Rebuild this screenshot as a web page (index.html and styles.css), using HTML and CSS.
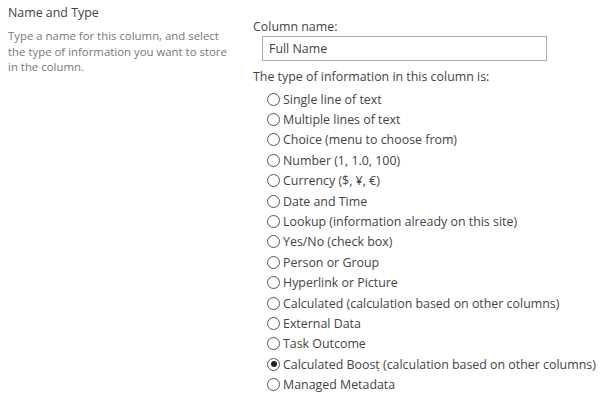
FILE: index.html
```html
<!DOCTYPE html>
<html>
<head>
<meta charset="utf-8">
<link rel="stylesheet" href="styles.css">
</head>
<body>
<div class="page">
  <div class="section-info">
    <h3 class="section-title">Name and Type</h3>
    <p class="section-desc">Type a name for this column, and select the type of information you want to store in the column.</p>
  </div>
  <div class="section-body">
    <div class="label">Column name:</div>
    <div class="input-box">Full Name</div>
    <div class="label label-type">The type of information in this column is:</div>
    <ul class="options">
      <li class="option"><span class="radio"></span>Single line of text</li>
      <li class="option"><span class="radio"></span>Multiple lines of text</li>
      <li class="option"><span class="radio"></span>Choice (menu to choose from)</li>
      <li class="option"><span class="radio"></span>Number (1, 1.0, 100)</li>
      <li class="option"><span class="radio"></span>Currency ($, ¥, €)</li>
      <li class="option"><span class="radio"></span>Date and Time</li>
      <li class="option"><span class="radio"></span>Lookup (information already on this site)</li>
      <li class="option"><span class="radio"></span>Yes/No (check box)</li>
      <li class="option"><span class="radio"></span>Person or Group</li>
      <li class="option"><span class="radio"></span>Hyperlink or Picture</li>
      <li class="option"><span class="radio"></span>Calculated (calculation based on other columns)</li>
      <li class="option"><span class="radio"></span>External Data</li>
      <li class="option"><span class="radio"></span>Task Outcome</li>
      <li class="option"><span class="radio checked"></span>Calculated Boosṭ (calculation based on other columns)</li>
      <li class="option"><span class="radio"></span>Managed Metadata</li>
    </ul>
  </div>
</div>
</body>
</html>
```
FILE: styles.css
```css
html, body {
  margin: 0;
  padding: 0;
  background: #ffffff;
}
body {
  font-family: "Open Sans", "Noto Sans", sans-serif;
  color: #444444;
}
.page {
  display: flex;
  padding: 4px 0 0 8px;
}
.section-info {
  width: 226px;
  flex: none;
}
.section-title {
  margin: 0;
  font-size: 12.4px;
  font-weight: normal;
  color: #444444;
  line-height: 18px;
}
.section-desc {
  margin: 6px 0 0 0;
  font-size: 11.4px;
  line-height: 15.5px;
  color: #777777;
}
.section-body {
  margin-left: 19px;
  padding-top: 14px;
}
.label {
  font-size: 12.4px;
  line-height: 18px;
  color: #444444;
}
.input-box {
  margin: 0 0 0 9px;
  width: 271px;
  height: 23px;
  border: 1px solid #ababab;
  padding: 0 6px;
  font-size: 12.4px;
  line-height: 23px;
  color: #444444;
}
.label-type {
  margin-top: 7px;
}
.options {
  list-style: none;
  margin: 3px 0 0 0;
  padding: 0 0 0 14px;
}
.option {
  display: flex;
  align-items: center;
  height: 20.4px;
  font-size: 12.4px;
  color: #444444;
}
.radio {
  width: 11px;
  height: 11px;
  border: 1px solid #555555;
  border-radius: 50%;
  margin-right: 3px;
  flex: none;
  position: relative;
}
.radio.checked::after {
  content: "";
  position: absolute;
  left: 2.5px;
  top: 2.5px;
  width: 6px;
  height: 6px;
  border-radius: 50%;
  background: #222222;
}
```
